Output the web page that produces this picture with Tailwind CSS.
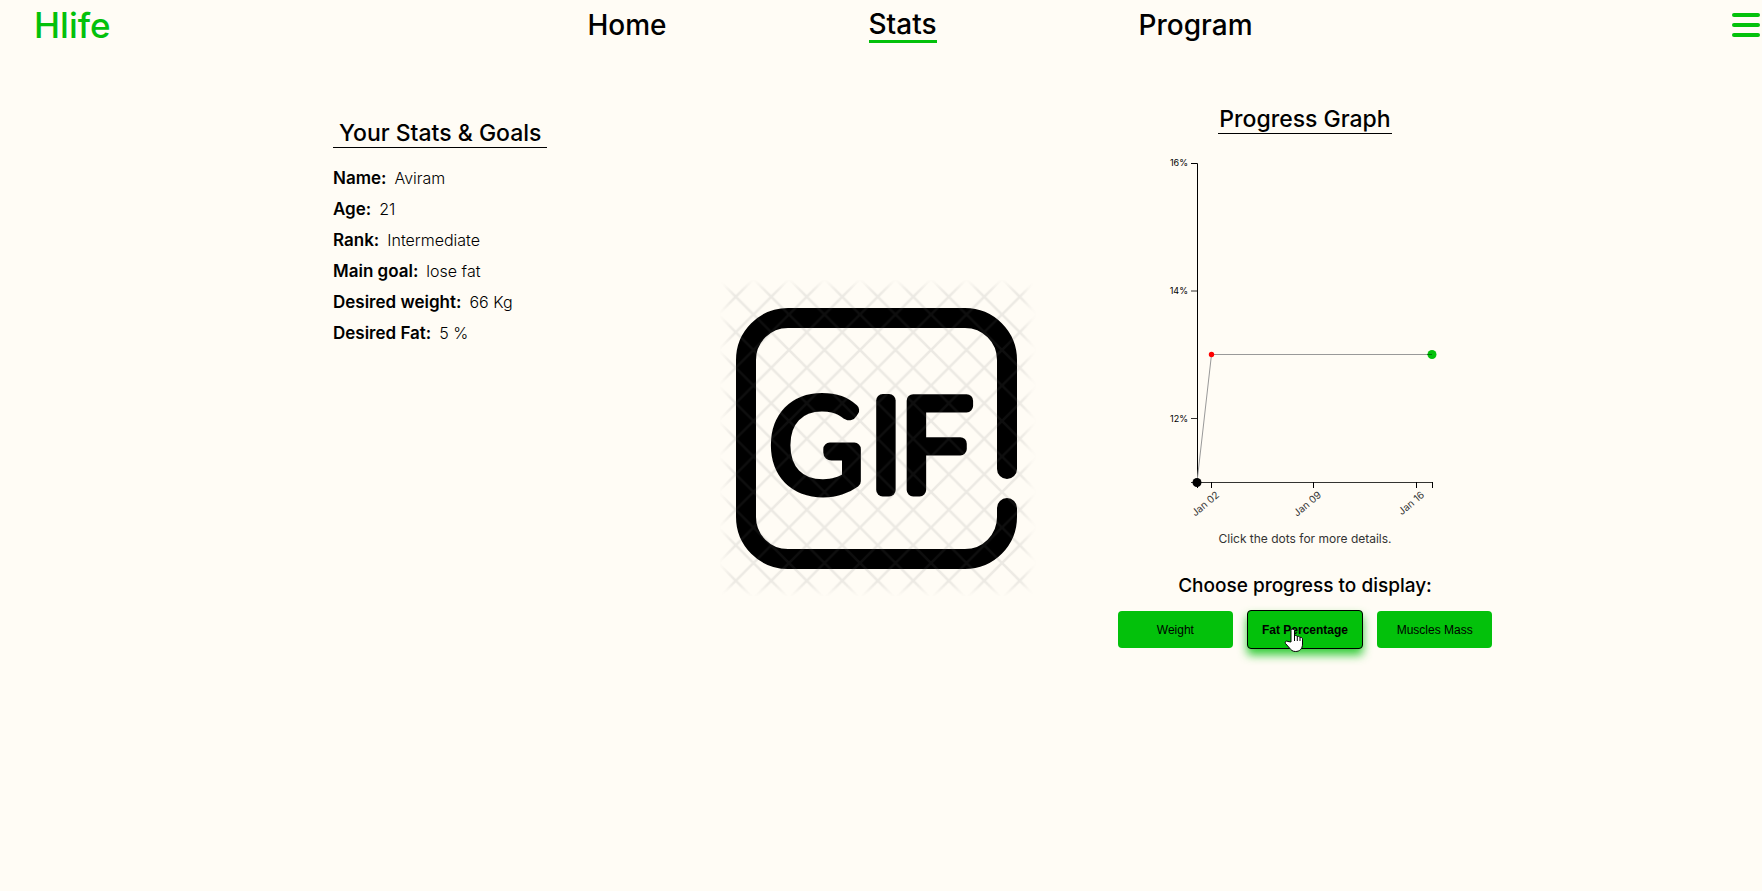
<!DOCTYPE html>
<html lang="en">
<head>
<meta charset="utf-8">
<meta name="viewport" content="width=device-width, initial-scale=1">
<title>Hlife - Stats</title>
<script src="https://cdn.jsdelivr.net/npm/@tailwindcss/browser@4"></script>
</head>
<body class="min-h-screen bg-[#fffcf5] font-['Inter',sans-serif] text-black">
<header class="flex h-[50px] items-center justify-between pr-0.5 pl-[34px]">
  <a href="#" class="w-[100px] text-[35px] leading-[50px] font-medium text-[#03c10b]">Hlife</a>
  <nav class="flex items-center gap-[202px] pr-[26px] text-[28px] leading-9 font-medium">
    <a href="#">Home</a>
    <a href="#" aria-current="page" class="border-b-3 border-[#03c10b] leading-8">Stats</a>
    <a href="#">Program</a>
  </nav>
  <button type="button" aria-label="Menu" class="flex w-7 flex-col gap-1.5">
    <span class="h-1 w-full rounded-full bg-[#03c10b]"></span>
    <span class="h-1 w-full rounded-full bg-[#03c10b]"></span>
    <span class="h-1 w-full rounded-full bg-[#03c10b]"></span>
  </button>
</header>

<main class="flex items-start justify-between pt-[56px] pr-[270px] pl-[333px]">
  <section class="w-[305px] pt-[14px]">
    <h2 class="inline-block border-b border-black px-1.5 text-[23px] leading-[27px] font-medium">Your Stats &amp; Goals</h2>
    <dl class="mt-[15px] text-[16px] leading-[31px]">
      <div class="flex gap-2"><dt class="text-[17px] font-semibold">Name:</dt><dd class="font-light">Aviram</dd></div>
      <div class="flex gap-2"><dt class="text-[17px] font-semibold">Age:</dt><dd class="font-light">21</dd></div>
      <div class="flex gap-2"><dt class="text-[17px] font-semibold">Rank:</dt><dd class="font-light">Intermediate</dd></div>
      <div class="flex gap-2"><dt class="text-[17px] font-semibold">Main goal:</dt><dd class="font-light">lose fat</dd></div>
      <div class="flex gap-2"><dt class="text-[17px] font-semibold">Desired weight:</dt><dd class="font-light">66 Kg</dd></div>
      <div class="flex gap-2"><dt class="text-[17px] font-semibold">Desired Fat:</dt><dd class="font-light">5 %</dd></div>
    </dl>
  </section>

  <figure class="pt-[174px]">
    <svg width="316" height="316" viewBox="0 0 316 316" role="img" aria-label="GIF">
      <defs>
        <pattern id="lattice" x="69" y="70" width="35.5" height="35.5" patternUnits="userSpaceOnUse">
          <path d="M-2 -2L37.5 37.5M-2 37.5L37.5 -2" stroke="#707070" stroke-width="2.6"/>
        </pattern>
        <filter id="soft"><feGaussianBlur stdDeviation="5"/></filter>
        <mask id="fade"><rect x="6" y="6" width="302" height="304" rx="4" fill="#fff" filter="url(#soft)"/></mask>
      </defs>
      <path d="M287 189V80A42 42 0 0 0 245 38H68A42 42 0 0 0 26 80V237A42 42 0 0 0 68 279H245A42 42 0 0 0 287 237V228" fill="none" stroke="#000" stroke-width="20" stroke-linecap="round"/>
      <g font-family="Lato, sans-serif" font-weight="300" font-size="126" stroke="#000" stroke-width="13" stroke-linejoin="round">
        <text x="50" y="210">G</text>
        <text x="166" y="210" text-anchor="middle">I</text>
        <text x="180" y="210">F</text>
      </g>
      <rect width="316" height="316" fill="url(#lattice)" opacity=".13" mask="url(#fade)"/>
    </svg>
  </figure>

  <section class="flex w-[374px] flex-col items-center">
    <h2 class="border-b border-black px-px text-[23px] leading-[27px] font-medium">Progress Graph</h2>
    <svg class="mt-[16px]" width="304" height="375" viewBox="0 0 304 375" font-family="Inter, sans-serif" font-size="10">
      <g fill="none" stroke="#000">
        <path d="M38 13.5H44.5V332.5"/>
        <path d="M38 141H44M38 268.5H44" stroke-opacity=".8"/>
        <path d="M38 332.5H279.5" stroke-opacity=".8"/>
        <path d="M44.5 332V338M58.500 332V338M160.500 332V338M263.500 332V338M279.500 332V338"/>
        <path d="M44 332L58.500 204.500H279" stroke="#999"/>
      </g>
      <circle cx="44" cy="332.500" r="4.500"/>
      <circle cx="58.500" cy="204.500" r="2.700" fill="#f00"/>
      <circle cx="279" cy="204.500" r="4.500" fill="#03c10b"/>
      <path d="M274 204.500H279" stroke="#000" stroke-opacity=".4"/>
      <g text-anchor="end" font-size="9">
        <text x="35" y="16">16%</text>
        <text x="35" y="144">14%</text>
        <text x="35" y="272">12%</text>
      </g>
      <g text-anchor="end" fill="#333">
        <text transform="translate(67 346) rotate(-40)">Jan 02</text>
        <text transform="translate(169 346) rotate(-40)">Jan 09</text>
        <text transform="translate(272 346) rotate(-40)">Jan 16</text>
      </g>
    </svg>
    <p class="mt-1.5 text-[12px] leading-4 text-[#333]">Click the dots for more details.</p>
    <h3 class="mt-[25px] text-[19px] leading-7 font-medium">Choose progress to display:</h3>
    <div class="mt-[11px] flex w-full gap-3.5 font-['Liberation_Sans',sans-serif] text-xs">
      <button type="button" class="h-[37px] flex-1 rounded bg-[#03c10b]">Weight</button>
      <button type="button" aria-pressed="true" class="relative -my-px h-[39px] flex-1 rounded border border-black bg-[#03c10b] font-bold whitespace-nowrap shadow-[0_6px_10px_#03c10bcc]">Fat Percentage
        <svg class="absolute top-4 left-9" width="20" height="26" viewBox="0 0 20 26" aria-hidden="true">
          <path d="M7 15V3.500a1.800 1.800 0 0 1 3.500 0V9c1-1 2.500-.5 2.800.6c1-.7 2.300-.2 2.600.9c1.200-.5 2.600.1 2.600 1.600V17c0 5-3 7.500-7 7.500c-3 0-4.500-1.500-6-3.500L1.500 16.500c-1-1.800.8-3.200 2.500-2Z" fill="#fff" stroke="#000"/>
          <path d="M10.500 9V14M13.300 9.500V14M16 10.500V14" stroke="#000"/>
        </svg>
      </button>
      <button type="button" class="h-[37px] flex-1 rounded bg-[#03c10b]">Muscles Mass</button>
    </div>
  </section>
</main>
</body>
</html>
